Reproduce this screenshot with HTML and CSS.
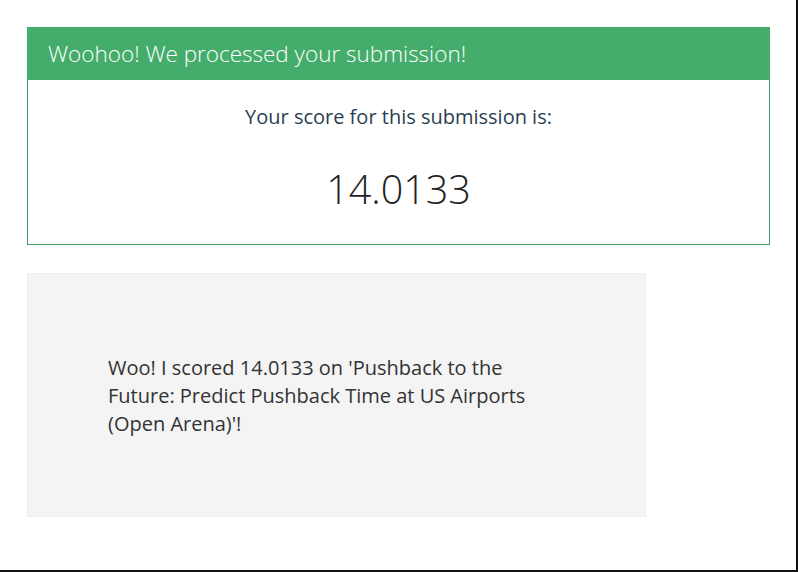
FILE: index.html
```html
<!DOCTYPE html>
<html>
<head>
<meta charset="utf-8">
<link rel="stylesheet" href="styles.css">
</head>
<body>
<div class="page">
  <section class="card">
    <div class="card-header">Woohoo! We processed your submission!</div>
    <div class="card-body">
      <p class="score-label">Your score for this submission is:</p>
      <p class="score">14.0133</p>
    </div>
  </section>
  <div class="share">
    <p class="share-text">Woo! I scored 14.0133 on 'Pushback to the Future: Predict Pushback Time at US Airports (Open Arena)'!</p>
  </div>
</div>
</body>
</html>
```

FILE: styles.css
```css
html, body {
  margin: 0;
  padding: 0;
  background: #fff;
}
.page {
  box-sizing: border-box;
  width: 798px;
  height: 572px;
  border-right: 2px solid #111;
  border-bottom: 2px solid #111;
  padding: 27px 26px 0 27px;
  font-family: "Open Sans", sans-serif;
}
.card {
  border: 1px solid #3f9d65;
}
.card-header {
  background: #45ad6b;
  color: #fff;
  height: 53px;
  margin: -1px -1px 0 -1px;
  padding: 0 21px;
  display: flex;
  align-items: center;
  font-size: 22.5px;
  font-weight: 300;
}
.card-body {
  height: 164px;
  display: flex;
  flex-direction: column;
  align-items: center;
}
.score-label {
  margin: 23px 0 0;
  font-size: 20px;
  color: #2a3f4f;
  line-height: 28px;
}
.score {
  margin: 32px 0 0;
  font-size: 39.5px;
  font-weight: 300;
  color: #222;
  line-height: 52px;
}
.share {
  margin-top: 28px;
  width: 619px;
  box-sizing: border-box;
  background: #f4f4f4;
  border: 1px solid #efefef;
  padding: 80px 80px 78px;
}
.share-text {
  margin: 0;
  font-size: 20px;
  line-height: 28px;
  color: #333;
}
```
